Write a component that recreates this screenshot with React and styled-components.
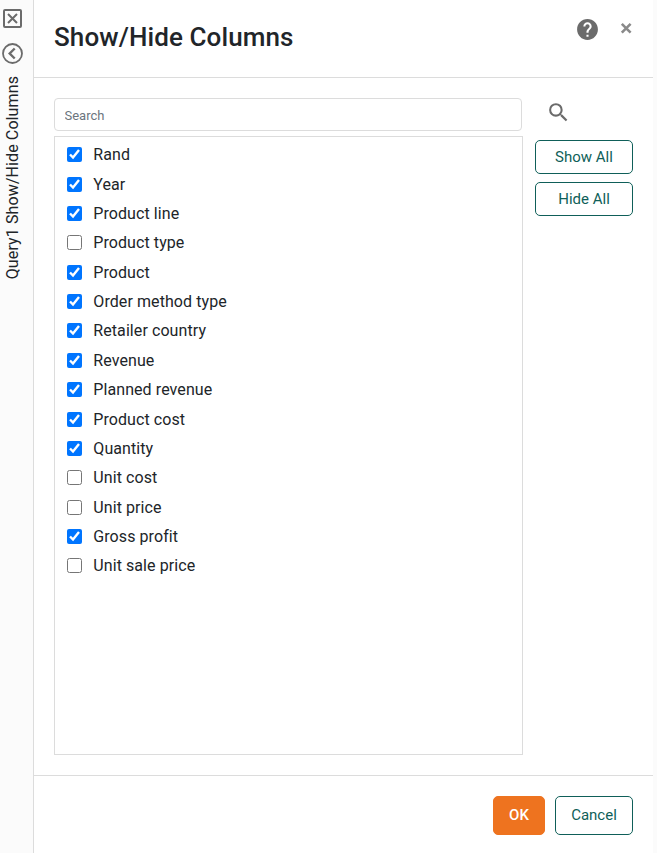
import React, { useState } from 'react'
import styled, { createGlobalStyle } from 'styled-components'
import { MdHelp, MdSearch } from 'react-icons/md'

const teal = '#0f5f59'
const orange = '#ee731f'
const line = '#dcdcdc'
const grey = '#6b6b6b'

const GlobalStyle = createGlobalStyle`
  * {
    box-sizing: border-box;
  }
  body {
    margin: 0;
    background: #fbfbfb;
    color: #212529;
    font-family: Roboto, sans-serif;
    font-size: 16px;
  }
`

const Page = styled.div`
  display: flex;
  height: 853px;
  padding-right: 4px;
`

const Sidebar = styled.aside`
  display: flex;
  flex-direction: column;
  align-items: flex-start;
  width: 34px;
  padding: 8px 0 0 2px;
  border-right: 1px solid ${line};

  svg {
    display: block;
    flex: none;
  }
`

const BackIcon = styled.div`
  margin-top: 14px;
`

const SideLabel = styled.div`
  margin: 12px 0 0 1px;
  writing-mode: vertical-rl;
  transform: rotate(180deg);
  font-size: 16px;
  letter-spacing: 0.11px;
  line-height: 20px;
  white-space: nowrap;
`

const Panel = styled.main`
  display: flex;
  flex: 1;
  flex-direction: column;
  background: #fff;
`

const Header = styled.header`
  display: flex;
  align-items: flex-start;
  height: 78px;
  padding: 17px 20px 0;
  border-bottom: 1px solid ${line};
  color: ${grey};
`

const Title = styled.h1`
  flex: 1;
  margin: 3px 0 0;
  color: #212529;
  font-size: 26px;
  font-weight: 500;
  letter-spacing: 0.1px;
  line-height: 34px;
`

const CloseButton = styled.button`
  display: flex;
  margin: 5px 0 0 20px;
  padding: 0;
  border: 0;
  background: none;
`

const Body = styled.div`
  display: flex;
  flex: 1;
  gap: 12px;
  padding: 20px;
`

const Fields = styled.div`
  display: flex;
  flex-direction: column;
  width: 469px;
`

const SearchInput = styled.input`
  width: 468px;
  height: 33px;
  margin-bottom: 5px;
  padding: 2px 9.5px 0;
  border: 1px solid ${line};
  border-radius: 4px;
  outline: 0;
  font-family: inherit;
  font-size: 13px;

  &::placeholder {
    color: #6c757d;
  }
`

const ColumnList = styled.div`
  flex: 1;
  padding: 3px 12px;
  border: 1px solid ${line};
`

const ColumnRow = styled.label`
  display: flex;
  align-items: center;
  height: 29.38px;
  letter-spacing: 0.08px;
`

const Checkbox = styled.input`
  width: 15px;
  height: 15px;
  margin: 0 11.3px 0 0;
`

const Actions = styled.div`
  display: flex;
  flex-direction: column;
  width: 98px;
  gap: 8px;
`

const SearchIcon = styled.div`
  height: 34px;
  padding: 2px 0 0 11px;
  color: ${grey};
`

const Button = styled.button`
  width: ${({ $width }) => $width || '100%'};
  height: ${({ $height }) => $height || '34px'};
  padding: 0;
  border: 1px solid ${({ $primary }) => ($primary ? orange : teal)};
  border-radius: 5px;
  background: ${({ $primary }) => ($primary ? orange : '#fff')};
  color: ${({ $primary }) => ($primary ? '#fff' : teal)};
  font-family: inherit;
  font-size: 15px;
  font-weight: ${({ $primary }) => ($primary ? 500 : 400)};
`

const FooterButton = styled(Button)`
  padding-bottom: 2px;
`

const Footer = styled.footer`
  display: flex;
  justify-content: flex-end;
  gap: 10px;
  height: 78px;
  padding: 20px 20px 0;
  border-top: 1px solid ${line};
`

const initialColumns = [
  { name: 'Rand', shown: true },
  { name: 'Year', shown: true },
  { name: 'Product line', shown: true },
  { name: 'Product type', shown: false },
  { name: 'Product', shown: true },
  { name: 'Order method type', shown: true },
  { name: 'Retailer country', shown: true },
  { name: 'Revenue', shown: true },
  { name: 'Planned revenue', shown: true },
  { name: 'Product cost', shown: true },
  { name: 'Quantity', shown: true },
  { name: 'Unit cost', shown: false },
  { name: 'Unit price', shown: false },
  { name: 'Gross profit', shown: true },
  { name: 'Unit sale price', shown: false },
]

const App = () => {
  const [columns, setColumns] = useState(initialColumns)

  const setAll = (shown) => setColumns(columns.map((c) => ({ ...c, shown })))
  const toggle = (name) =>
    setColumns(columns.map((c) => (c.name === name ? { ...c, shown: !c.shown } : c)))

  return (
    <Page>
      <GlobalStyle />
      <Sidebar>
        <svg width="21" height="21" viewBox="0 0 21 21" fill="none" stroke={grey} strokeWidth="2">
          <rect x="2" y="2" width="17" height="17" rx="1" />
          <path d="M6 6l9 9M15 6l-9 9" />
        </svg>
        <BackIcon>
          <svg width="21" height="21" viewBox="0 0 21 21" fill="none" stroke={grey} strokeWidth="1.8">
            <circle cx="10.5" cy="10.5" r="9.5" />
            <path d="M12.7 5.5l-5 5 5 5" strokeWidth="2.4" />
          </svg>
        </BackIcon>
        <SideLabel>Query1 Show/Hide Columns</SideLabel>
      </Sidebar>
      <Panel>
        <Header>
          <Title>Show/Hide Columns</Title>
          <MdHelp size={25} />
          <CloseButton aria-label="Close">
            <svg width="13" height="13" viewBox="0 0 13 13" stroke="#8a8a8a" strokeWidth="2.6">
              <path d="M1.8 1.8l8.8 8.8M10.6 1.8l-8.8 8.8" />
            </svg>
          </CloseButton>
        </Header>
        <Body>
          <Fields>
            <SearchInput placeholder="Search" />
            <ColumnList>
              {columns.map((c) => (
                <ColumnRow key={c.name}>
                  <Checkbox type="checkbox" checked={c.shown} onChange={() => toggle(c.name)} />
                  {c.name}
                </ColumnRow>
              ))}
            </ColumnList>
          </Fields>
          <Actions>
            <SearchIcon>
              <MdSearch size={25} />
            </SearchIcon>
            <Button onClick={() => setAll(true)}>Show All</Button>
            <Button onClick={() => setAll(false)}>Hide All</Button>
          </Actions>
        </Body>
        <Footer>
          <FooterButton $primary $width="52px" $height="39px">OK</FooterButton>
          <FooterButton $width="78px" $height="39px">Cancel</FooterButton>
        </Footer>
      </Panel>
    </Page>
  )
}

export default App
